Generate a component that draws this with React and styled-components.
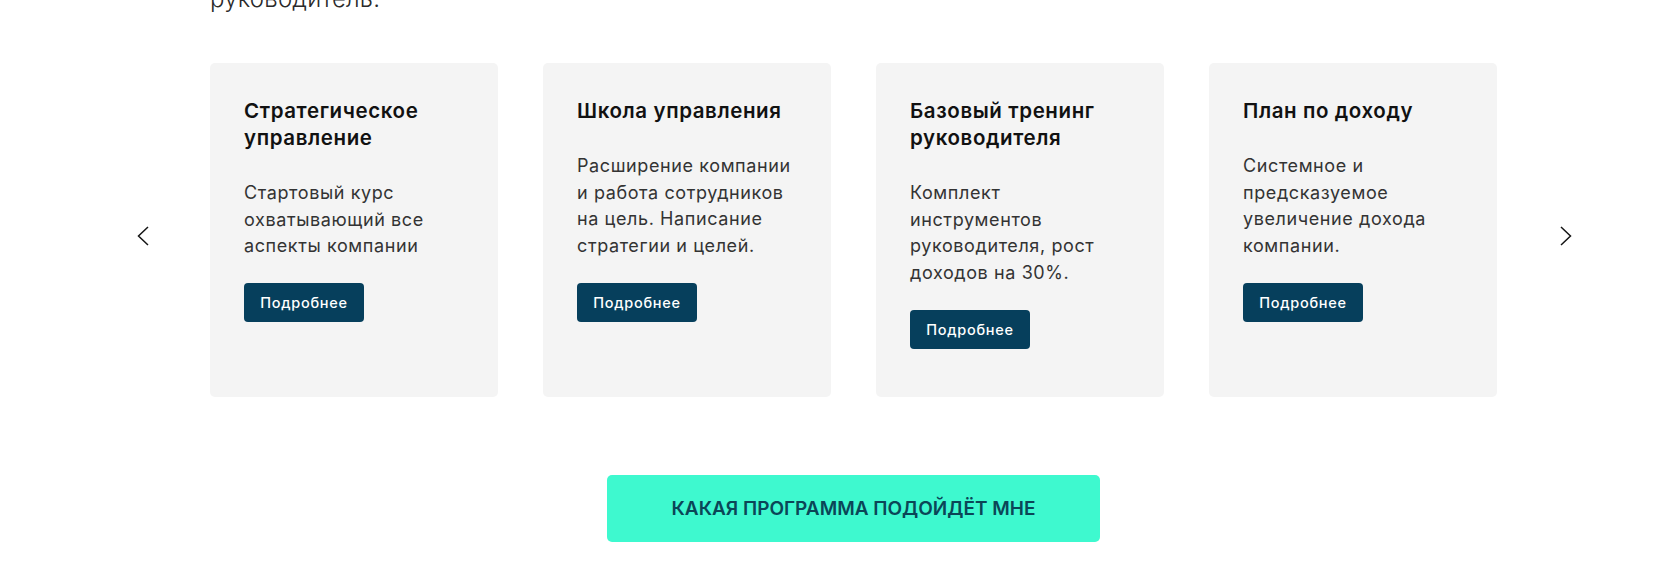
import React from "react";
import styled, { createGlobalStyle } from "styled-components";

const GlobalStyle = createGlobalStyle`
  html, body {
    margin: 0;
    padding: 0;
    background: #ffffff;
    overflow: hidden;
  }
  body {
    font-family: Inter, "Noto Sans", "DejaVu Sans", sans-serif;
    color: #1c1c1c;
  }
`;

const Page = styled.div`
  width: 1680px;
  height: 582px;
  overflow: hidden;
`;

// only the tail of the section lead is in view
const Lead = styled.p`
  margin: -19px 0 0 210px;
  font-size: 24px;
  line-height: 36px;
  font-weight: 300;
  color: #2a2a2a;
  letter-spacing: 0.2px;
`;

const Slider = styled.div`
  display: flex;
  align-items: center;
  margin: 46px 0 0 137px;
`;

const Arrow = styled.button`
  display: flex;
  align-items: center;
  justify-content: center;
  width: 12px;
  height: 20px;
  padding: 0;
  margin-top: 12px;
  border: none;
  background: none;
  cursor: pointer;
  color: #151515;
`;

const Track = styled.div`
  display: flex;
  gap: 45px;
  width: 1289px;
  margin: 0 61px;
`;

const Card = styled.div`
  box-sizing: border-box;
  display: flex;
  flex-direction: column;
  align-items: flex-start;
  width: 288px;
  height: 334px;
  padding: 34px 34px;
  background: #f4f4f4;
  border-radius: 5px;
`;

const Title = styled.h3`
  margin: 0;
  font-size: 20.5px;
  line-height: 27px;
  font-weight: 600;
  color: #111111;
  letter-spacing: 0.6px;
`;

const Text = styled.p`
  margin: 29px 0 0;
  font-size: 18px;
  line-height: 26.7px;
  font-weight: 400;
  color: #333333;
  letter-spacing: 0.6px;
`;

const More = styled.button`
  margin-top: 23px;
  height: 39px;
  width: 120px;
  padding: 0;
  border: none;
  border-radius: 4px;
  background: #063f5c;
  color: #ffffff;
  font-family: inherit;
  font-size: 14.5px;
  font-weight: 500;
  letter-spacing: 0.7px;
  cursor: pointer;
`;

const Cta = styled.button`
  display: block;
  margin: 78px 0 0 607px;
  width: 493px;
  height: 67px;
  border: none;
  border-radius: 5px;
  background: #3ef9cf;
  color: #0b4657;
  font-family: inherit;
  font-size: 19px;
  font-weight: 600;
  letter-spacing: 0;
  text-transform: uppercase;
  cursor: pointer;
`;

const Chevron = ({ dir }) => (
  <svg width="12" height="20" viewBox="0 0 12 20" fill="none">
    <polyline
      points={dir === "left" ? "11,1 1.5,10 11,19" : "1,1 10.5,10 1,19"}
      stroke="currentColor"
      strokeWidth="1.5"
    />
  </svg>
);

const programs = [
  {
    title: "Стратегическое управление",
    text: "Стартовый курс охватывающий все аспекты компании",
  },
  {
    title: "Школа управления",
    text: "Расширение компании и работа сотрудников на цель. Написание стратегии и целей.",
  },
  {
    title: "Базовый тренинг руководителя",
    text: "Комплект инструментов руководителя, рост доходов на 30%.",
  },
  {
    title: "План по доходу",
    text: "Системное и предсказуемое увеличение дохода компании.",
  },
];

const App = () => {
  return (
    <Page>
      <GlobalStyle />
      <Lead>руководитель.</Lead>
      <Slider>
        <Arrow aria-label="prev">
          <Chevron dir="left" />
        </Arrow>
        <Track>
          {programs.map((p, i) => (
            <Card key={i}>
              <Title>{p.title}</Title>
              <Text>{p.text}</Text>
              <More>Подробнее</More>
            </Card>
          ))}
        </Track>
        <Arrow aria-label="next">
          <Chevron dir="right" />
        </Arrow>
      </Slider>
      <Cta>Какая программа подойдёт мне</Cta>
    </Page>
  );
};

export default App;
